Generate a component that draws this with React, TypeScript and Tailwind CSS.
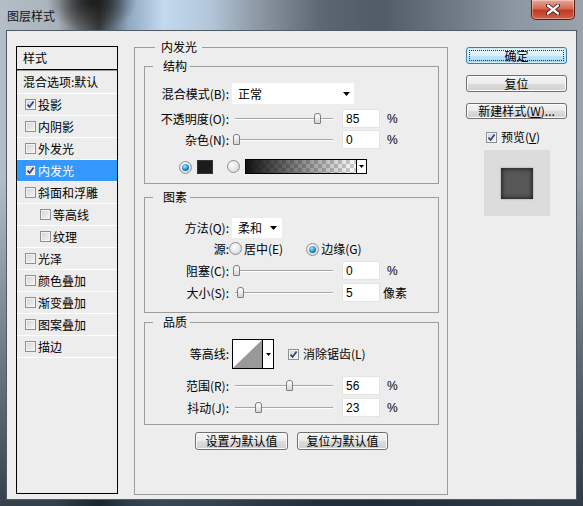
import React from 'react';

function Check({ on }: { on?: boolean }) {
  return (
    <span className="inline-flex h-[11px] w-[11px] shrink-0 items-center justify-center border border-[#8e8f8f] bg-[linear-gradient(135deg,#d2d2d2,#f6f6f6)] shadow-[inset_0_0_0_1px_#f4f4f4]">
      {on && (
        <svg viewBox="0 0 9 9" width="9" height="9">
          <path d="M1.5 4.6 L3.6 7 L7.6 1.6" fill="none" stroke="#2b3f82" strokeWidth="1.7" />
        </svg>
      )}
    </span>
  );
}

function Radio({ on }: { on?: boolean }) {
  return (
    <span className="inline-flex h-[13px] w-[13px] shrink-0 items-center justify-center rounded-full border border-[#8e8f8f] bg-[radial-gradient(circle_at_40%_35%,#ffffff,#cfcfcf)]">
      {on && (
        <span className="h-[7px] w-[7px] rounded-full bg-[radial-gradient(circle_at_40%_35%,#a8ecff,#1c86c8_55%,#0a4a7e)]" />
      )}
    </span>
  );
}

function Arrow() {
  return (
    <svg width="7" height="4" viewBox="0 0 7 4">
      <path d="M0 0H7L3.5 4Z" fill="#000" />
    </svg>
  );
}

function Slider({ v }: { v: number }) {
  return (
    <div className="relative h-[21px] w-[110px] shrink-0">
      <div className="absolute left-[3px] top-[10px] h-[2px] w-[98px] border-t border-[#a6a6a6] bg-white" />
      <div
        className="absolute top-[5px] h-[11px] w-[7px] rounded-t-[3px] rounded-b-[1px] border border-[#7d7d7d] bg-[linear-gradient(180deg,#ffffff,#d4d4d4)]"
        style={{ left: 0.5 + v * 0.96 }}
      />
    </div>
  );
}

function Num({ v }: { v: number }) {
  return (
    <div className="flex h-[19px] w-[38px] shrink-0 items-center border border-[#e4e4e4] bg-white pl-[3px] font-['Liberation_Sans',sans-serif] text-[12px]">
      {v}
    </div>
  );
}

function SliderRow({ label, v, unit, className }: { label: string; v: number; unit: string; className: string }) {
  return (
    <div className={`flex h-[21px] items-center ${className}`}>
      <div className="w-[84px] text-right">{label}</div>
      <div className="ml-[3px]">
        <Slider v={v} />
      </div>
      <Num v={v} />
      <div className={unit === '%' ? "ml-[7px] font-['Liberation_Sans',sans-serif] text-[12px]" : 'ml-[3px]'}>{unit}</div>
    </div>
  );
}

function Btn({ children, className }: { children: React.ReactNode; className: string }) {
  return (
    <div
      className={`flex items-center justify-center rounded-[3px] border border-[#707070] bg-[linear-gradient(180deg,#f3f3f3_0%,#ebebeb_50%,#dddddd_50%,#cfcfcf_100%)] shadow-[inset_0_0_0_1px_#fcfcfc] ${className}`}
    >
      {children}
    </div>
  );
}

const items: { t: string; c?: boolean; sel?: boolean; sub?: boolean }[] = [
  { t: '投影', c: true },
  { t: '内阴影' },
  { t: '外发光' },
  { t: '内发光', c: true, sel: true },
  { t: '斜面和浮雕' },
  { t: '等高线', sub: true },
  { t: '纹理', sub: true },
  { t: '光泽' },
  { t: '颜色叠加' },
  { t: '渐变叠加' },
  { t: '图案叠加' },
  { t: '描边' },
];

export default function App() {
  return (
    <div className="flex h-[506px] w-[583px] flex-col overflow-hidden bg-[radial-gradient(ellipse_45px_30px_at_92px_2px,rgba(25,25,25,0.95),rgba(25,25,25,0)),linear-gradient(180deg,rgba(0,0,0,0)_0%,rgba(0,0,0,0)_35%,rgba(22,32,44,0.8)_100%),linear-gradient(90deg,#b4bec8_0%,#a9b2ba_10%,#74787b_13%,#3a3c3e_17%,#8ea8c1_22%,#c3d9ee_28%,#b3c6d9_36%,#8e99a4_44%,#5c6772_55%,#505b66_65%,#6f7a85_78%,#8c96a0_88%,#9aa3ab_100%)] font-['Noto_Sans_CJK_SC',sans-serif] text-[12px] leading-none text-black">
      {/* title bar */}
      <div className="flex h-[30px] shrink-0 items-start">
        <div className="ml-[7px] mt-[10px] text-[12px] text-[#111]">图层样式</div>
        <div className="ml-auto mr-[8px] flex h-[20px] w-[44px] items-center justify-center rounded-b-[5px] border border-t-0 border-[#5a1f17] bg-[linear-gradient(180deg,#e9a596_0%,#d46a55_45%,#c23a22_55%,#d0614a_100%)] shadow-[inset_0_0_0_1px_rgba(255,255,255,0.35)]">
          <svg width="14" height="11" viewBox="0 0 14 11">
            <path d="M2 1.5 L12 9.5 M12 1.5 L2 9.5" stroke="#3a1410" strokeWidth="4" strokeLinecap="round" />
            <path d="M2 1.5 L12 9.5 M12 1.5 L2 9.5" stroke="#ffffff" strokeWidth="2.3" strokeLinecap="round" />
          </svg>
        </div>
      </div>

      {/* client */}
      <div className="mx-[6px] mb-[6px] flex flex-1 border border-[#4f5a65] bg-[#ededed] pl-[9px]">
        {/* left list */}
        <div className="mt-[15px] flex h-[448px] w-[102px] shrink-0 flex-col border border-black">
          <div className="flex h-[23px] items-center border-b border-black pl-[6px]">样式</div>
          <div className="h-px bg-[#9a9a9a]" />
          <div className="flex h-[22px] items-center pl-[6px]">混合选项:默认</div>
          {items.map((it, i) => (
            <div
              key={it.t}
              className={`flex h-[22px] items-center border-t border-white ${it.sub ? 'pl-[23px]' : 'pl-[8px]'} ${it.sel ? 'bg-[#3399ff] text-white' : ''} ${i === items.length - 1 ? 'h-[23px] border-b' : ''}`}
            >
              <Check on={it.c} />
              <span className="ml-[2px]">{it.t}</span>
            </div>
          ))}
        </div>

        {/* middle */}
        <fieldset className="ml-[16px] mt-[8px] h-[456px] w-[314px] shrink-0 border border-[#9c9c9c] pl-[9px] pr-[8px] pt-[3px]">
          <legend className="ml-[11px] pl-[6px] pr-[5px] leading-[16px]">内发光</legend>

          {/* 结构 */}
          <fieldset className="border border-[#9c9c9c] pb-[6px]">
            <legend className="ml-[8px] pl-[10px] pr-[3px] leading-[16px]">结构</legend>
            <div className="mt-[9px] flex h-[21px] items-center">
              <div className="w-[84px] text-right">混合模式(B):</div>
              <div className="ml-[3px] flex h-[21px] w-[122px] items-center justify-between bg-white pl-[6px] pr-[4px]">
                <span>正常</span>
                <Arrow />
              </div>
            </div>
            <SliderRow label="不透明度(O):" v={85} unit="%" className="mt-[4px]" />
            <SliderRow label="杂色(N):" v={0} unit="%" className="mt-0" />
            <div className="mt-[6px] flex h-[21px] items-center">
              <div className="ml-[34px]">
                <Radio on />
              </div>
              <div className="ml-[5px] h-[14px] w-[16px] border border-[#333] bg-[#1c1c1c]" />
              <div className="ml-[14px]">
                <Radio />
              </div>
              <div className="ml-[5px] flex h-[15px] w-[122px] border border-black">
                <div className="flex-1 bg-[linear-gradient(90deg,#111111,rgba(0,0,0,0)),repeating-conic-gradient(#cfcfcf_0%_25%,#ffffff_0%_50%)] [background-size:100%_100%,8px_8px]" />
                <div className="flex w-[10px] items-center justify-center border-l border-black bg-white">
                  <svg width="5" height="3" viewBox="0 0 5 3">
                    <path d="M0 0H5L2.5 3Z" fill="#000" />
                  </svg>
                </div>
              </div>
            </div>
          </fieldset>

          {/* 图素 */}
          <fieldset className="mt-[5px] border border-[#9c9c9c] pb-[9px]">
            <legend className="ml-[8px] pl-[10px] pr-[3px] leading-[16px]">图素</legend>
            <div className="mt-[12px] flex h-[21px] items-center">
              <div className="w-[84px] text-right">方法(Q):</div>
              <div className="ml-[3px] flex h-[20px] w-[50px] items-center justify-between bg-white pl-[6px] pr-[5px]">
                <span>柔和</span>
                <Arrow />
              </div>
            </div>
            <div className="flex h-[21px] items-center">
              <div className="w-[84px] text-right">源:</div>
              <Radio />
              <span className="ml-[2px]">居中(E)</span>
              <div className="ml-[23px]">
                <Radio on />
              </div>
              <span className="ml-[2px]">边缘(G)</span>
            </div>
            <SliderRow label="阻塞(C):" v={0} unit="%" className="mt-[1px]" />
            <SliderRow label="大小(S):" v={5} unit="像素" className="mt-[1px]" />
          </fieldset>

          {/* 品质 */}
          <fieldset className="mt-[1px] border border-[#9c9c9c] pb-[6px]">
            <legend className="ml-[8px] pl-[10px] pr-[3px] leading-[16px]">品质</legend>
            <div className="mt-[9px] flex h-[30px] items-center">
              <div className="w-[84px] text-right">等高线:</div>
              <div className="ml-[3px] flex h-[30px] w-[42px] border border-black bg-white">
                <svg width="29" height="28" viewBox="0 0 29 28" className="block">
                  <path d="M0 28 L29 0 L29 28 Z" fill="#999999" />
                </svg>
                <div className="flex w-[11px] items-center justify-center border-l border-black bg-white">
                  <svg width="5" height="3" viewBox="0 0 5 3">
                    <path d="M0 0H5L2.5 3Z" fill="#000" />
                  </svg>
                </div>
              </div>
              <div className="ml-[14px]">
                <Check on />
              </div>
              <span className="ml-[4px]">消除锯齿(L)</span>
            </div>
            <SliderRow label="范围(R):" v={56} unit="%" className="mt-[6px]" />
            <SliderRow label="抖动(J):" v={23} unit="%" className="mt-[1px]" />
          </fieldset>

          <div className="mt-[7px] flex justify-center gap-[9px]">
            <Btn className="h-[18px] w-[93px]">设置为默认值</Btn>
            <Btn className="h-[18px] w-[91px]">复位为默认值</Btn>
          </div>
        </fieldset>

        {/* right column */}
        <div className="ml-[18px] mt-[16px] flex w-[101px] shrink-0 flex-col">
          <div className="flex h-[17px] items-center justify-center rounded-[3px] border border-[#3c7fb1] bg-[linear-gradient(180deg,#eaf6fd_0%,#d9f0fc_50%,#bee6fd_50%,#a7d9f5_100%)] p-[2px] shadow-[inset_0_0_0_1px_#cdeafb]">
            <div className="flex h-full w-full items-center justify-center border border-dotted border-[#333]">确定</div>
          </div>
          <Btn className="mt-[11px] h-[17px] w-[101px]">复位</Btn>
          <Btn className="mt-[11px] h-[16px] w-[101px]">
            <span>
              新建样式(<span className="underline">W</span>)...
            </span>
          </Btn>
          <div className="mt-[10px] flex h-[16px] items-center pl-[20px]">
            <Check on />
            <span className="ml-[4px]">
              预览(<span className="underline">V</span>)
            </span>
          </div>
          <div className="mt-[5px] flex h-[66px] w-[66px] items-center justify-center self-center bg-[#dcdcdc]">
            <div className="h-[31px] w-[32px] bg-[#575757] shadow-[inset_0_0_4px_1px_#1e1e1e,0_0_2px_#9a9a9a]" />
          </div>
        </div>
      </div>
    </div>
  );
}
